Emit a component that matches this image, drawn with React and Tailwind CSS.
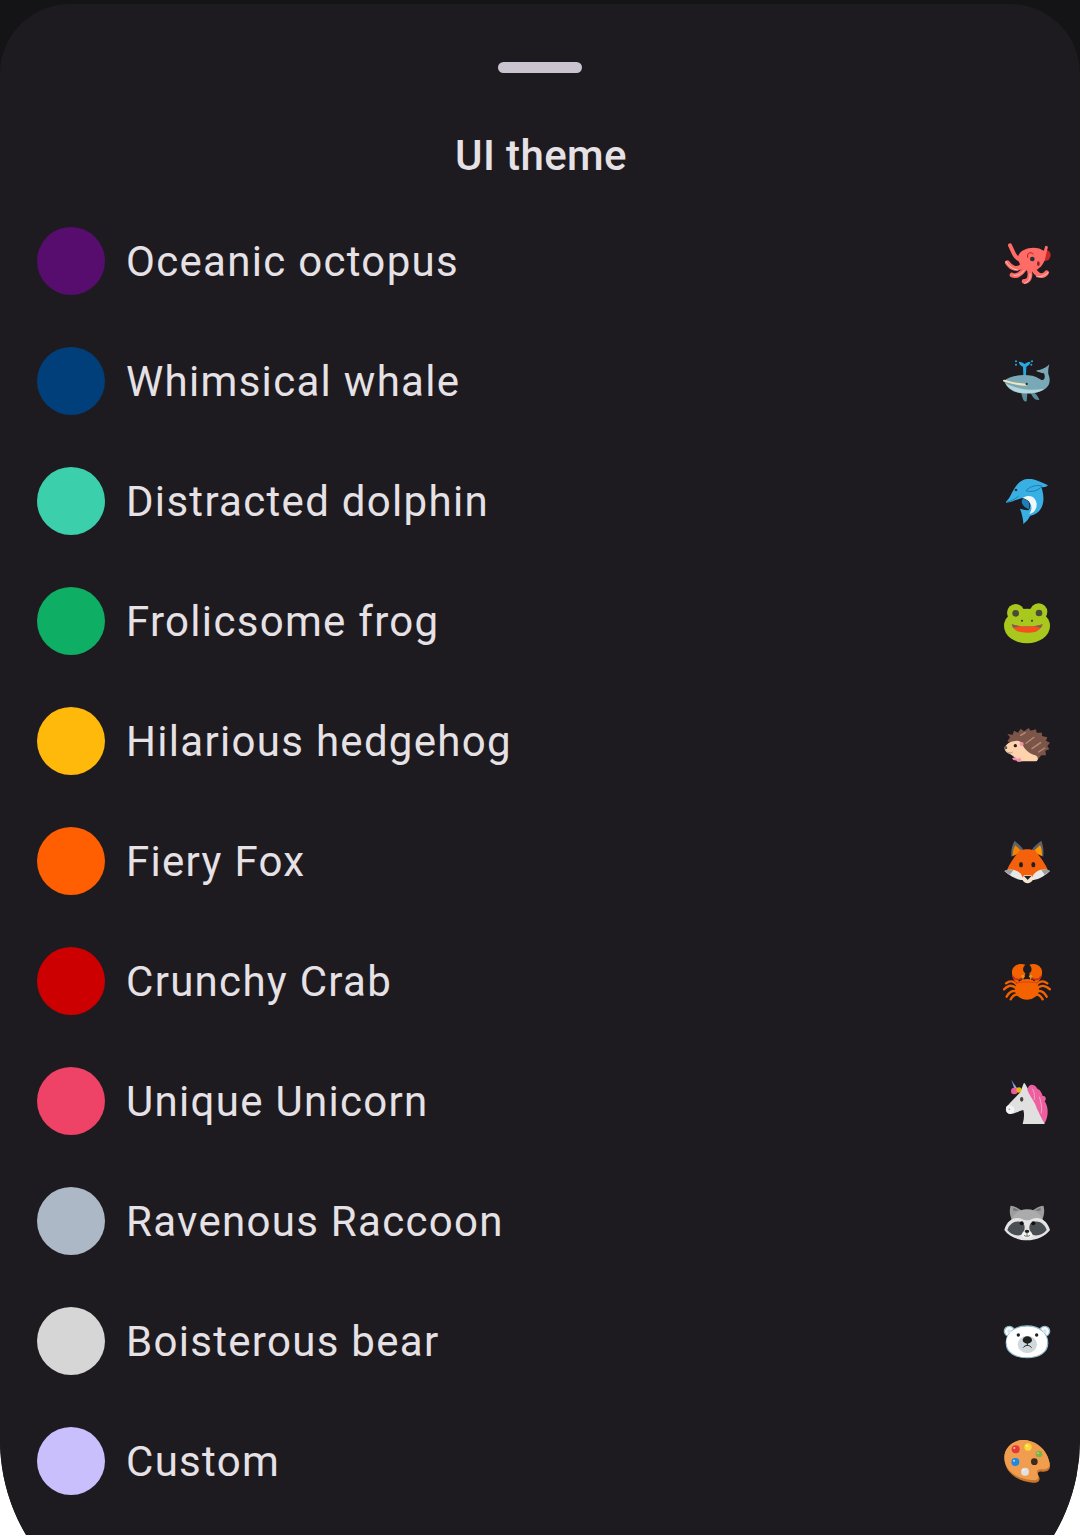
import React from "react";

const Octopus = () => (
  <svg width="48" height="48" viewBox="69 57 144 144" className="mt-1 shrink-0">
    <circle cx="195" cy="106" r="17" fill="#c62828" />
    <g fill="none" stroke="#ff6b66" strokeWidth="14" strokeLinecap="round">
      <path d="M176 130 C192 122 194 100 199 82" strokeWidth="9" />
      <path d="M128 122 C104 118 100 96 90 76" strokeWidth="12" />
      <path d="M128 136 C112 152 94 146 82 128" />
      <path d="M136 144 C124 162 108 172 96 165" />
      <path d="M148 148 C154 172 146 186 132 184" />
      <path d="M160 146 C172 170 190 172 200 158" />
    </g>
    <path d="M114 110 C120 84 170 74 192 94 C204 112 190 140 166 152 C146 162 114 142 114 110Z" fill="#ff6b66" />
    <path d="M78 124 C86 140 100 148 112 150 M102 166 C112 168 124 162 132 152 M134 190 C146 186 152 174 150 162 M170 170 C180 172 192 168 204 158" fill="none" stroke="#ffc7c2" strokeWidth="3" strokeLinecap="round" />
    <path d="M143 112 C140 98 152 94 160 102" fill="none" stroke="#b71c1c" strokeWidth="3" strokeLinecap="round" />
    <circle cx="157" cy="117" r="7" fill="#263238" />
    <ellipse cx="175" cy="131" rx="4" ry="7" fill="#8e2020" />
  </svg>
);

const Whale = () => (
  <svg width="48" height="48" viewBox="69 417 144 144" className="mt-1 shrink-0">
    <path d="M130 468 L129 440 C122 438 118 432 116 425 C124 426 130 428 134 432 C138 428 144 426 152 425 C150 432 144 438 139 440 L138 468Z" fill="#29a9e0" />
    <g fill="#29a9e0">
      <circle cx="108" cy="424" r="3" />
      <circle cx="108" cy="434" r="3" />
      <circle cx="156" cy="424" r="3" />
      <circle cx="154" cy="434" r="3" />
    </g>
    <path d="M124 518 L142 520 L140 544 C132 546 128 540 124 518Z" fill="#5b8b99" />
    <path d="M148 508 C162 514 174 528 178 540 C166 542 156 534 148 508Z" fill="#5b8b99" />
    <path d="M72 482 C92 464 150 458 178 476 C192 486 198 474 192 460 C184 458 174 456 168 452 C180 450 196 446 208 433 C205 445 204 452 205 462 C217 492 202 512 165 518 C125 526 85 518 72 482Z" fill="#79a9b6" />
    <path d="M76 490 C92 518 130 524 165 518 C176 516 186 512 192 506 C160 512 116 510 76 490Z" fill="#b3d5db" />
    <path d="M72 482 C92 488 116 494 138 494" fill="none" stroke="#f3e4bd" strokeWidth="6" strokeLinecap="round" />
    <circle cx="140" cy="492" r="3.5" fill="#263238" />
  </svg>
);

const Dolphin = () => (
  <svg width="48" height="48" viewBox="69 777 144 144" className="mt-1 shrink-0">
    <path d="M78 845 C96 832 100 790 135 778 C158 772 178 784 204 796 C198 802 190 802 184 802 C198 840 190 880 150 888 C146 898 138 906 130 912 C130 900 126 882 120 866 C130 868 140 872 146 870 C156 858 150 836 130 834 C112 836 96 848 78 848Z" fill="#39b0e3" />
    <path d="M128 834 C150 820 168 832 170 852 C170 868 162 880 148 882 C160 866 156 842 128 834Z" fill="#eef7fb" />
    <path d="M128 836 C120 848 130 860 146 868 C152 852 146 838 128 836Z" fill="#1c7fb8" />
    <path d="M138 812 C150 798 170 794 186 798 C176 812 156 818 138 812Z" fill="none" stroke="#1c7fb8" strokeWidth="3" />
    <path d="M80 846 C92 844 104 838 116 828" fill="none" stroke="#1c7fb8" strokeWidth="3" />
    <circle cx="108" cy="810" r="4" fill="#263238" />
  </svg>
);

const Frog = () => (
  <svg width="48" height="48" viewBox="69 57 144 144" className="mt-1 shrink-0">
    <circle cx="107" cy="98" r="26" fill="#a8c81e" />
    <circle cx="176" cy="96" r="26" fill="#a8c81e" />
    <ellipse cx="141" cy="138" rx="69" ry="52" fill="#a8c81e" />
    <circle cx="107" cy="100" r="10" fill="#4a4a3a" />
    <circle cx="177" cy="99" r="10" fill="#4a4a3a" />
    <circle cx="126" cy="122" r="3" fill="#333" />
    <circle cx="156" cy="122" r="3" fill="#333" />
    <path d="M95 133 C122 142 160 142 188 133 C182 146 176 152 168 155 C150 160 126 158 112 154 C104 150 98 142 95 133Z" fill="#f4511e" />
    <path d="M95 133 C122 142 160 142 188 133 C186 139 184 142 182 144 C158 136 124 136 100 144 C98 141 96 137 95 133Z" fill="#7d5f55" />
  </svg>
);

const Hedgehog = () => (
  <svg width="48" height="48" viewBox="69 417 144 144" className="mt-1 shrink-0">
    <path d="M82 484 L90 472 L82 462 L98 464 L102 452 L114 458 L122 446 L132 454 L146 444 L152 452 L168 448 L170 458 L186 458 L186 468 L202 472 L198 482 L210 488 L202 498 L208 508 L196 512 L198 526 L184 526 L174 538 L120 520 L95 490Z" fill="#7a5548" />
    <g stroke="#b98a78" strokeWidth="4" strokeLinecap="round">
      <path d="M138 490 L162 472 M156 506 L182 488 M176 516 L194 504 M122 466 L136 458" />
    </g>
    <path d="M73 503 C80 492 88 486 100 484 C114 480 124 484 128 494 C132 506 146 520 166 526 C176 530 176 542 168 544 L112 544 C104 530 92 522 84 520 C78 516 74 510 73 503Z" fill="#fdd2ac" />
    <circle cx="125" cy="492" r="6" fill="#f48fb1" />
    <path d="M96 534 L108 532 L112 542 L100 540Z M110 536 L122 534 L124 545 L112 545Z" fill="#f48fb1" />
    <circle cx="106" cy="497" r="5" fill="#212121" />
    <circle cx="77" cy="503" r="5" fill="#616161" />
    <path d="M82 516 C88 520 94 520 98 516" fill="none" stroke="#8d6e63" strokeWidth="2" />
  </svg>
);

const Fox = () => (
  <svg width="48" height="48" viewBox="69 777 144 144" className="mt-1 shrink-0">
    <path d="M94 830 C92 808 98 792 104 782 C112 790 124 798 132 812Z" fill="#5f6368" />
    <path d="M190 830 C192 808 188 792 184 782 C174 790 162 798 154 812Z" fill="#5f6368" />
    <path d="M98 828 C98 812 102 802 106 796 C112 802 120 808 126 816Z" fill="#f48400" />
    <path d="M186 828 C186 812 184 802 180 796 C174 802 166 808 160 816Z" fill="#ff9800" />
    <path d="M118 812 C132 806 152 806 166 812 C180 830 196 850 205 872 L160 900 L126 900 L80 872 C88 850 104 830 118 812Z" fill="#f4600c" />
    <path d="M73 873 C90 864 112 868 124 884 L132 900 C120 902 96 894 73 873Z" fill="#e8e8e8" />
    <path d="M210 873 C194 864 172 868 160 884 L152 900 C164 902 188 894 210 873Z" fill="#e8e8e8" />
    <path d="M73 873 C84 868 92 868 100 870 L90 884Z M210 873 C200 868 192 868 184 870 L194 884Z" fill="#9e9e9e" />
    <path d="M126 898 L132 886 L154 886 L160 898 C156 906 148 910 143 910 C136 910 130 906 126 898Z" fill="#f5e6d3" />
    <path d="M132 888 L154 888 L143 900Z" fill="#212121" />
    <ellipse cx="123" cy="854" rx="6" ry="8" fill="#212121" />
    <ellipse cx="160" cy="854" rx="6" ry="8" fill="#212121" />
  </svg>
);

const Crab = () => (
  <svg width="48" height="48" viewBox="69 57 144 144" className="mt-1 shrink-0">
    <g fill="none" stroke="#f46200" strokeWidth="7" strokeLinecap="round">
      <path d="M112 136 C100 120 88 122 78 130 M110 146 C96 132 84 136 72 148 M112 156 C98 148 88 156 80 170 M120 166 C108 160 98 168 92 178" />
      <path d="M168 136 C180 120 192 122 202 130 M170 146 C184 132 196 136 210 148 M168 156 C182 148 192 156 200 170 M160 166 C172 160 182 168 188 178" />
      <path d="M112 124 C104 118 102 112 102 104 M168 124 C176 118 180 112 180 104" strokeWidth="9" />
    </g>
    <path d="M98 86 C106 72 124 70 136 74 C126 84 128 94 136 100 C134 122 104 124 98 108 C95 100 95 92 98 86Z" fill="#f46200" />
    <path d="M184 86 C176 72 160 70 148 74 C158 84 156 94 148 100 C150 122 180 124 184 108 C187 100 187 92 184 86Z" fill="#f46200" />
    <path d="M98 108 C104 120 118 122 130 112 M184 108 C178 120 164 122 152 112" fill="none" stroke="#c62828" strokeWidth="5" />
    <g stroke="#e09b1c" strokeWidth="3">
      <path d="M129 108 L129 126 M152 108 L152 126" />
    </g>
    <circle cx="129" cy="109" r="5" fill="#e09b1c" />
    <circle cx="152" cy="109" r="5" fill="#e09b1c" />
    <ellipse cx="141" cy="148" rx="36" ry="31" fill="#f46200" />
    <path d="M105 132 C118 126 164 126 177 132 C168 122 114 122 105 132Z" fill="#d84315" />
  </svg>
);

const Unicorn = () => (
  <svg width="48" height="48" viewBox="69 417 144 144" className="mt-1 shrink-0">
    <path d="M94 419 L116 452 L107 460Z" fill="#5c8fd6" />
    <path d="M100 430 L116 452 L108 458 Z" fill="#b39ddb" />
    <circle cx="103" cy="453" r="10" fill="#ec5a9c" />
    <circle cx="117" cy="450" r="8" fill="#e6b800" />
    <path d="M128 552 L194 552 C190 520 170 470 150 456 C144 448 136 430 132 428 C128 436 124 448 122 456 C108 470 92 486 80 500 C74 510 80 522 92 522 C104 522 118 512 130 510 C134 524 132 538 128 552Z" fill="#e0e0e0" />
    <path d="M78 506 C78 496 88 494 96 498 C106 504 104 516 96 520 C86 524 78 516 78 506Z" fill="#f5f5f5" />
    <circle cx="88" cy="508" r="2.5" fill="#9e9e9e" />
    <path d="M142 450 C146 428 164 432 172 446 C182 450 186 460 188 468 C198 466 200 478 194 484 C206 500 206 530 194 550 C186 540 178 520 170 505 C168 490 154 478 142 450Z" fill="#ee5fa0" />
    <path d="M156 446 C162 452 166 470 162 480 M178 470 C184 490 186 500 184 520" fill="none" stroke="#f8a5c8" strokeWidth="3" />
    <ellipse cx="125" cy="478" rx="5" ry="7" fill="#424242" />
  </svg>
);

const Raccoon = () => (
  <svg width="48" height="48" viewBox="69 777 144 144" className="mt-1 shrink-0">
    <path d="M96 840 C86 820 90 802 92 797 C102 798 118 804 128 816Z" fill="#9e9e9e" />
    <path d="M186 840 C196 820 192 802 190 797 C180 798 164 804 154 816Z" fill="#9e9e9e" />
    <path d="M100 812 L100 803 C106 805 112 808 116 812Z M182 812 L182 803 C176 805 170 808 166 812Z" fill="#757575" />
    <path d="M88 870 C88 830 110 808 141 808 C172 808 194 830 194 870Z" fill="#ababab" />
    <path d="M73 870 C82 838 106 828 128 838 C134 842 148 842 154 838 C176 828 200 838 210 870 C196 888 170 901 141 901 C112 901 86 888 73 870Z" fill="#e4e4e4" />
    <path d="M82 870 C90 846 112 838 130 850 C136 858 136 874 124 884 C112 890 92 884 82 870Z" fill="#4a4f54" />
    <path d="M200 870 C192 846 170 838 152 850 C146 858 146 874 158 884 C170 890 190 884 200 870Z" fill="#4a4f54" />
    <circle cx="125" cy="850" r="6" fill="#111" />
    <circle cx="160" cy="850" r="6" fill="#111" />
    <path d="M124 888 C128 864 154 864 158 888 C150 896 132 896 124 888Z" fill="#f2f2f2" />
    <ellipse cx="141" cy="874" rx="7" ry="5" fill="#212121" />
    <path d="M132 886 C136 890 146 890 150 886 M141 878 L141 888" fill="none" stroke="#333" strokeWidth="2" />
  </svg>
);

const Bear = () => (
  <svg width="48" height="48" viewBox="69 87 144 144" className="mt-1 shrink-0">
    <g stroke="#8fbccb" strokeWidth="4">
      <circle cx="88" cy="124" r="15" fill="#fafafa" />
      <circle cx="194" cy="124" r="15" fill="#fafafa" />
      <path d="M79 160 C78 130 104 108 141 108 C178 108 204 130 203 160 C203 188 176 203 141 203 C106 203 79 188 79 160Z" fill="#fff" />
    </g>
    <circle cx="88" cy="124" r="6" fill="#d7e6ec" />
    <circle cx="194" cy="124" r="6" fill="#d7e6ec" />
    <path d="M79 160 C78 130 104 110 141 110 C178 110 204 130 201 160 C201 186 176 201 141 201 C106 201 81 186 81 160Z" fill="#fff" />
    <ellipse cx="142" cy="163" rx="29" ry="26" fill="#cfd8dc" />
    <circle cx="115" cy="135" r="5" fill="#212121" />
    <circle cx="170" cy="135" r="5" fill="#212121" />
    <ellipse cx="142" cy="150" rx="14" ry="11" fill="#212121" />
    <path d="M142 158 L142 166 M130 172 C136 164 148 164 154 172" fill="none" stroke="#212121" strokeWidth="3" strokeLinecap="round" />
  </svg>
);

const Palette = () => (
  <svg width="48" height="48" viewBox="69 447 144 144" className="mt-1 shrink-0">
    <path d="M73 505 C73 470 104 448 134 450 C176 454 204 486 210 525 C212 540 200 547 186 545 C172 543 172 552 178 562 C182 574 170 580 158 578 C112 574 74 548 73 505Z" fill="#c9752e" />
    <path d="M73 502 C73 470 104 448 134 450 C176 454 204 486 209 520 C210 534 198 540 186 538 C170 536 168 546 174 556 C178 568 168 572 156 570 C112 566 74 544 73 502Z" fill="#f19d4f" />
    <circle cx="163" cy="515" r="10" fill="#3e2a1c" />
    <circle cx="107" cy="478" r="12" fill="#e53935" />
    <circle cx="144" cy="471" r="11" fill="#fdd835" />
    <circle cx="177" cy="492" r="10" fill="#7cb342" />
    <circle cx="106" cy="516" r="12" fill="#1e88e5" />
    <circle cx="135" cy="545" r="12" fill="#e0e0e0" />
    <g fill="#fff" opacity="0.7">
      <circle cx="103" cy="474" r="3" />
      <circle cx="141" cy="467" r="3" />
      <circle cx="174" cy="489" r="2.5" />
      <circle cx="102" cy="512" r="3" />
      <circle cx="131" cy="541" r="3" />
    </g>
  </svg>
);

const themes = [
  { name: "Oceanic octopus", dot: "bg-[#560d6e]", Icon: Octopus },
  { name: "Whimsical whale", dot: "bg-[#003f7a]", Icon: Whale },
  { name: "Distracted dolphin", dot: "bg-[#3bd0ab]", Icon: Dolphin },
  { name: "Frolicsome frog", dot: "bg-[#0fae65]", Icon: Frog },
  { name: "Hilarious hedgehog", dot: "bg-[#ffb90a]", Icon: Hedgehog },
  { name: "Fiery Fox", dot: "bg-[#ff5f00]", Icon: Fox },
  { name: "Crunchy Crab", dot: "bg-[#cc0000]", Icon: Crab },
  { name: "Unique Unicorn", dot: "bg-[#ef4267]", Icon: Unicorn },
  { name: "Ravenous Raccoon", dot: "bg-[#adb8c6]", Icon: Raccoon },
  { name: "Boisterous bear", dot: "bg-[#d6d6d6]", Icon: Bear },
  { name: "Custom", dot: "bg-[#cabffd]", Icon: Palette },
];

export default function App() {
  return (
    <div className="h-[1535px] overflow-hidden bg-white font-['Roboto',sans-serif]">
      <div className="h-[1626px] overflow-hidden rounded-b-[186px] bg-[#141416] pt-1">
        <div className="h-full rounded-t-[70px] bg-[#1d1b20]">
          <div className="flex justify-center pt-[58px]">
            <div className="h-[11px] w-[84px] rounded-full bg-[#cac4d0]" />
          </div>
          <h1 className="mt-[58px] pl-[2px] text-center text-[42px] leading-[50px] font-medium tracking-[0.4px] text-[#e6e1e5]">
            UI theme
          </h1>
          <div className="mt-[20px] flex flex-col">
            {themes.map(({ name, dot, Icon }) => (
              <div key={name} className="flex h-[120px] items-center pr-[29px] pl-[37px]">
                <div className={`h-[68px] w-[68px] shrink-0 rounded-full ${dot}`} />
                <span className="mt-[2px] ml-[21px] flex-1 text-[42px] leading-[56px] tracking-[1.3px] text-[#e6e1e5]">
                  {name}
                </span>
                <Icon />
              </div>
            ))}
          </div>
        </div>
      </div>
    </div>
  );
}
